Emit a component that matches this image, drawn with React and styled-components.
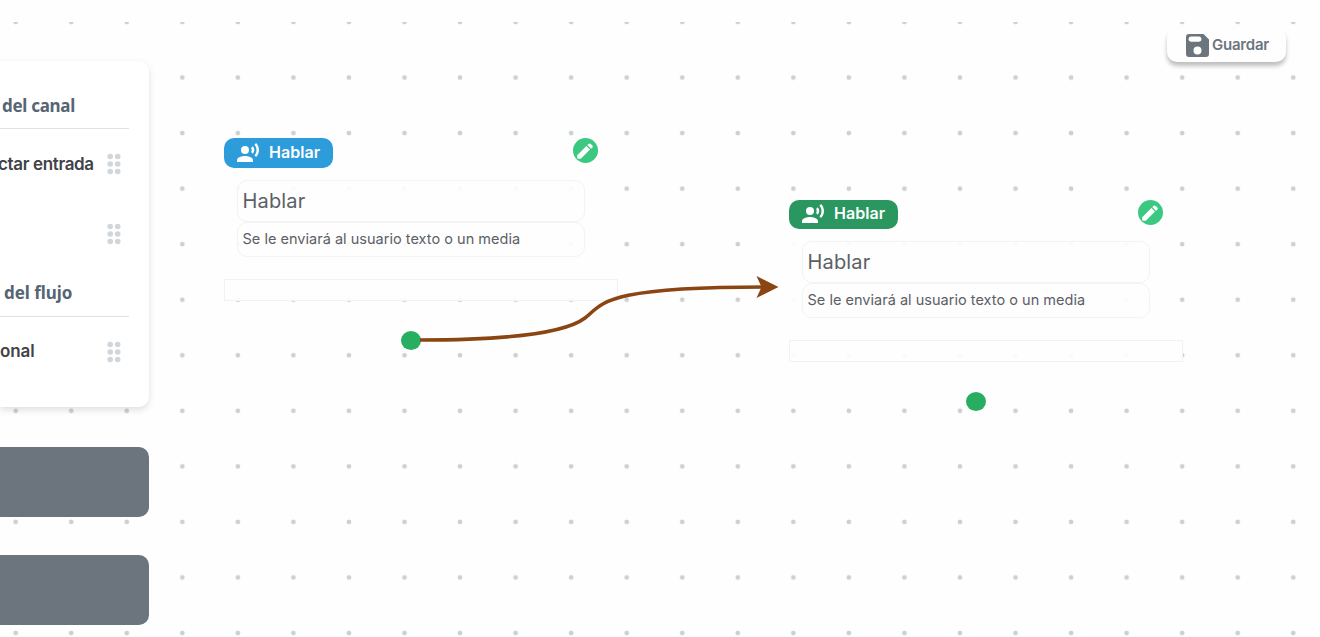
import React from "react";
import styled, { createGlobalStyle } from "styled-components";
import { MdRecordVoiceOver } from "react-icons/md";

const GlobalStyle = createGlobalStyle`
  * { box-sizing: border-box; }
  body { margin: 0; background: #fefefe; font-family: Inter, Roboto, "Liberation Sans", sans-serif; overflow: hidden; }
`;

const Page = styled.main`
  width: 1320px;
  height: 637px;
  padding-top: 22px;
  overflow: hidden;
`;

const Canvas = styled.div`
  position: relative;
  display: flex;
  justify-content: space-between;
  align-items: flex-start;
  height: 615px;
  overflow: hidden;
  background-image: radial-gradient(circle, #cbd0d1 2px, transparent 2.7px);
  background-size: 55.56px 55.56px;
  background-position: -12.1px -27.8px;
`;

const Sidebar = styled.aside`
  display: flex;
  flex-direction: column;
  gap: 38px;
  width: 149px;
  padding-top: 39px;
`;

const Panel = styled.section`
  height: 346px;
  margin-bottom: 2px;
  padding: 28px 20px 0 0;
  background: #fff;
  border-radius: 0 10px 10px 0;
  box-shadow: 0 3px 6px rgba(60, 70, 80, 0.16);
`;

const Heading = styled.h2`
  height: 40px;
  margin: 0 0 ${(p) => p.$after}px;
  padding-left: ${(p) => p.$indent}px;
  border-bottom: 1px solid #dfe2e3;
  color: #566573;
  font: 700 17px/${(p) => p.$line}px "Noto Sans", sans-serif;
  letter-spacing: ${(p) => p.$spacing}px;
  white-space: nowrap;
`;

const Item = styled.div`
  display: flex;
  justify-content: space-between;
  align-items: center;
  height: 30px;
  margin: 0 8px ${(p) => p.$after}px ${(p) => p.$indent}px;
  color: #404347;
  font-size: 17px;
  line-height: 20px;
  font-weight: 600;
  letter-spacing: ${(p) => p.$spacing}px;
  white-space: nowrap;
`;

const Label = styled.span`
  padding-bottom: ${(p) => p.$lift || 0}px;
`;

const Grip = styled.svg`
  flex: none;
  width: 14px;
  height: 22px;
  fill: #d0d6da;
`;

const Block = styled.div`
  height: 70px;
  background: #6c757d;
  border-radius: 0 10px 10px 0;
`;

const SaveButton = styled.button`
  display: flex;
  align-items: center;
  justify-content: center;
  gap: 3px;
  width: 119px;
  height: 34px;
  margin: 6px 34px 0 0;
  padding: 0 0 0 2px;
  border: 0;
  border-radius: 10px;
  background: #fefefe;
  box-shadow: 0 4px 4px rgba(0, 0, 0, 0.25);
  color: #6c757d;
  font: 600 15px/18px Inter, sans-serif;
  letter-spacing: -0.2px;
`;

const Node = styled.article`
  position: absolute;
  left: ${(p) => p.$x}px;
  top: ${(p) => p.$y}px;
  width: 374px;
`;

const NodeBody = styled.div`
  background: rgba(254, 254, 254, 0.9);
`;

const NodeHead = styled.header`
  display: flex;
  justify-content: space-between;
  height: ${(p) => p.$h}px;
`;

const Tag = styled.div`
  display: flex;
  align-items: center;
  gap: 9px;
  width: 109px;
  height: ${(p) => p.$h}px;
  padding: 0 0 1px 12px;
  border-radius: 10px;
  background: ${(p) => p.$color};
  color: #fff;
  font-size: 16px;
  line-height: 19px;
  font-weight: 600;
  letter-spacing: 0.05px;
  white-space: nowrap;
`;

const EditButton = styled.button`
  display: grid;
  place-items: center;
  width: 25px;
  height: 25px;
  padding: 0;
  border: 0;
  border-radius: 50%;
  background: #3bc880;
  color: #fff;
`;

const Field = styled.div`
  width: 348px;
  height: ${(p) => p.$h}px;
  margin-left: 13px;
  padding-left: 4.5px;
  border: 1px solid #f1f3f4;
  border-radius: 10px;
  color: #5b6065;
  font-size: ${(p) => p.$size}px;
  line-height: ${(p) => p.$line}px;
  letter-spacing: ${(p) => p.$spacing}px;
  white-space: nowrap;
`;

const Footer = styled.footer`
  width: 394px;
  height: 22px;
  border: 1px solid #f0f2f3;
  background: rgba(254, 254, 254, 0.9);
`;

const Spacer = styled.div`
  height: 22px;
`;

const Port = styled.div`
  width: 20px;
  height: 19px;
  margin: 30px auto 0;
  border-radius: 50%;
  background: #27ae60;
`;

const Wire = styled.svg`
  position: absolute;
  left: 0;
  top: -22px;
  pointer-events: none;
`;

function Dots() {
  return (
    <Grip viewBox="0 0 14 22">
      {[3.5, 11, 18.5].map((y) => (
        <React.Fragment key={y}>
          <circle cx="3.2" cy={y} r="2.8" />
          <circle cx="10.7" cy={y} r="2.8" />
        </React.Fragment>
      ))}
    </Grip>
  );
}

function PencilIcon() {
  return (
    <svg width="25" height="25" viewBox="0 0 25 25" fill="currentColor">
      <path d="M4.2 17.2L13.4 8L17 11.6L7.8 20.8H5.2a1 1 0 0 1-1-1Z" />
      <path d="M14.3 7.1L15.5 5.9a1.6 1.6 0 0 1 2.2 0L19.3 7.5a1.6 1.6 0 0 1 0 2.2L18 10.8Z" />
    </svg>
  );
}

function TalkNode({ x, y, color, tagHeight, headHeight }) {
  return (
    <Node $x={x} $y={y}>
      <NodeBody>
        <NodeHead $h={headHeight}>
          <Tag $color={color} $h={tagHeight}>
            <MdRecordVoiceOver size={24} />
            <Label $lift={1}>Hablar</Label>
          </Tag>
          <EditButton><PencilIcon /></EditButton>
        </NodeHead>
        <Field $h={42} $size={20} $line={40} $spacing={0.15}>Hablar</Field>
        <Field $h={35} $size={14.5} $line={32} $spacing={0.02}>Se le enviará al usuario texto o un media</Field>
        <Spacer />
      </NodeBody>
      <Footer />
      <Port />
    </Node>
  );
}

export default function App() {
  return (
    <Page>
      <GlobalStyle />
      <Canvas>
        <Sidebar>
          <Panel>
            <Heading $indent={2} $after={20} $line={33} $spacing={-0.3}>del canal</Heading>
            <Item $indent={-2} $after={40} $spacing={-0.35}><Label>ctar entrada</Label><Dots /></Item>
            <Item $indent={0} $after={28} $spacing={0}><Label /><Dots /></Item>
            <Heading $indent={4} $after={20} $line={32} $spacing={-0.05}>del flujo</Heading>
            <Item $indent={0} $after={0} $spacing={-0.1}><Label $lift={2}>onal</Label><Dots /></Item>
          </Panel>
          <Block />
          <Block />
        </Sidebar>
        <SaveButton>
          <svg width="23" height="23" viewBox="0 0 23 23">
            <path fill="currentColor" fillRule="evenodd" d="M3 0H17.5L23 5.5V20a3 3 0 0 1-3 3H3a3 3 0 0 1-3-3V3a3 3 0 0 1 3-3ZM5.2 2.5a2.6 2.6 0 0 0 0 5.2h7.6a2.6 2.6 0 0 0 0-5.2ZM11.5 12.5a4 4 0 1 0 0 8a4 4 0 0 0 0-8Z" />
          </svg>
          <Label $lift={1}>Guardar</Label>
        </SaveButton>
        <TalkNode x={224} y={116} color="#2d9cdb" tagHeight={30} headHeight={42} />
        <TalkNode x={789} y={178} color="#29975f" tagHeight={29} headHeight={41} />
        <Wire width="1320" height="637">
          <path d="M420 340C480 340 560 337 585 318C603 304 601 287 765 287" fill="none" stroke="#8b4513" strokeWidth="3.6" />
          <path d="M756.5 276L778.5 287L756.5 298L761.5 287Z" fill="#8b4513" />
        </Wire>
      </Canvas>
    </Page>
  );
}
